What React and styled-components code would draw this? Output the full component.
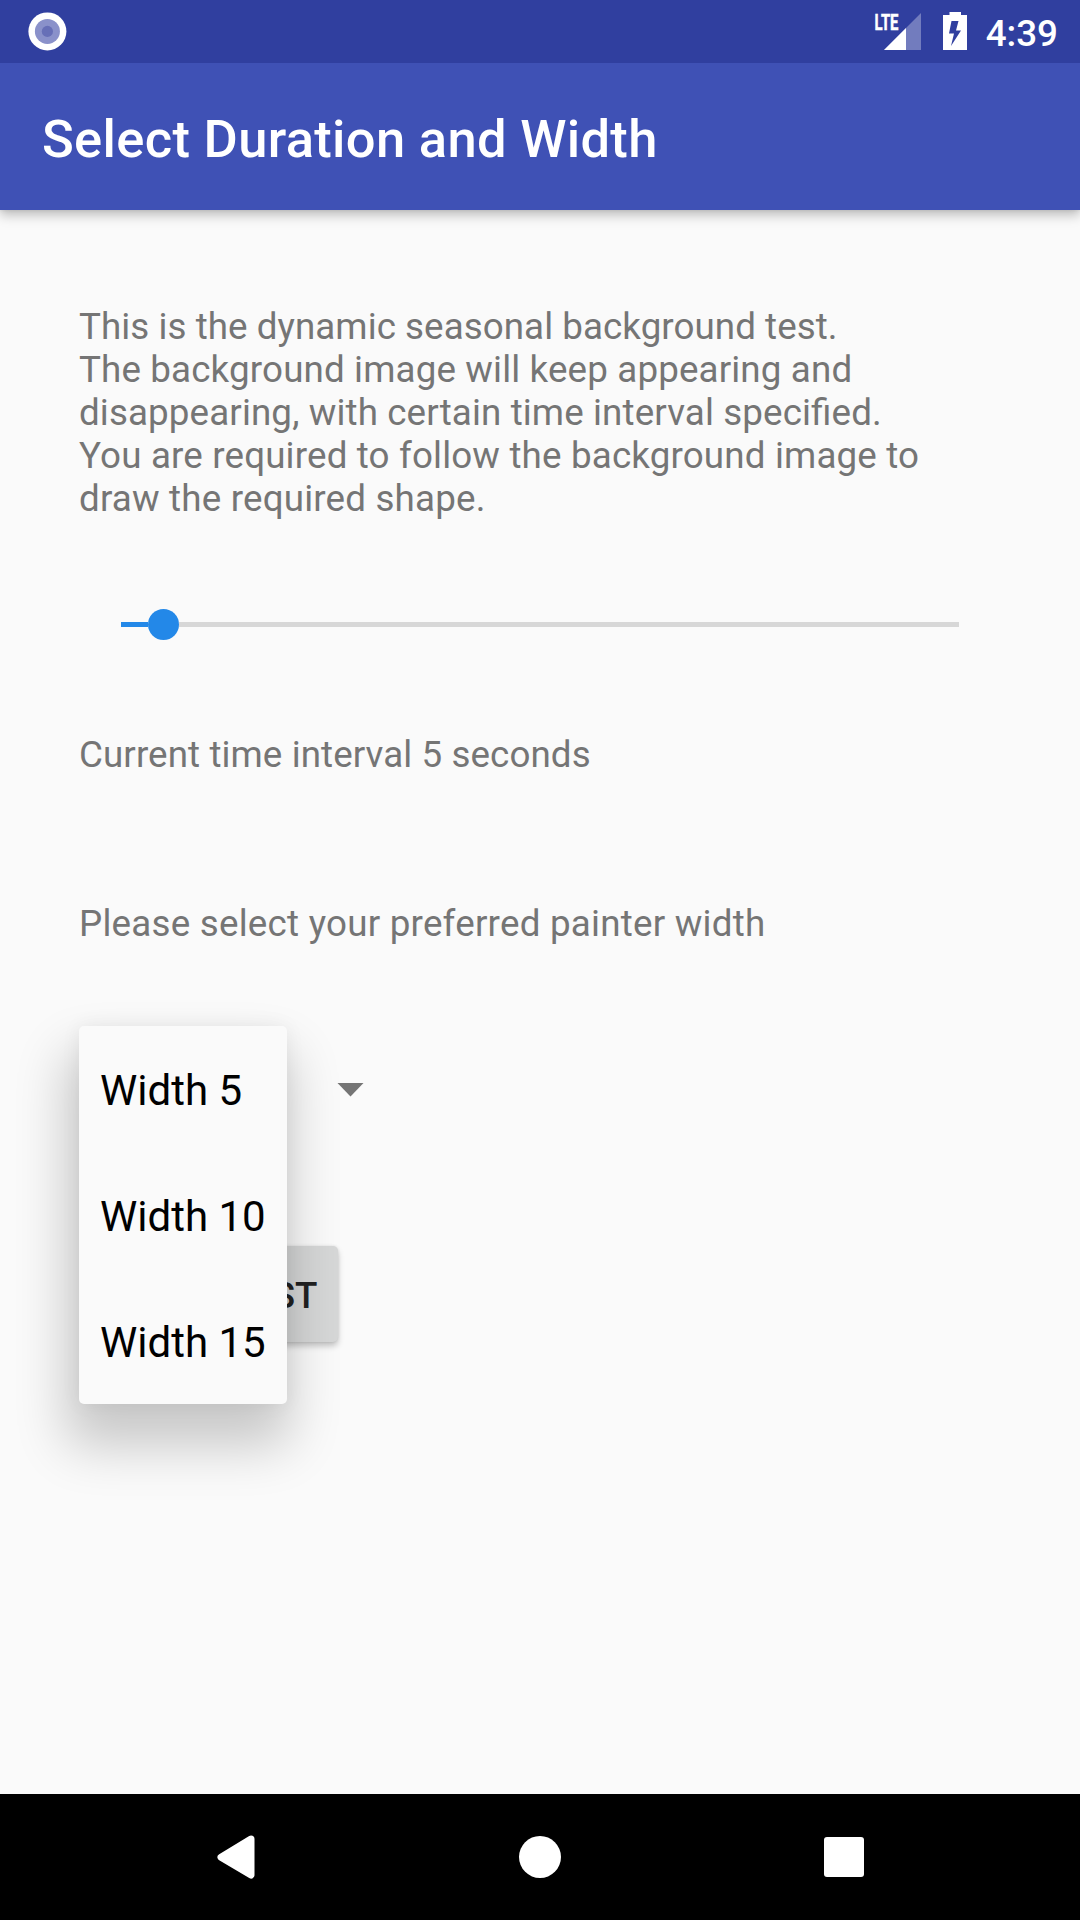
import React from "react";
import styled, { createGlobalStyle } from "styled-components";

const GlobalStyle = createGlobalStyle`
  * { box-sizing: border-box; }
  body { margin: 0; background: #fafafa; }
`;

const Screen = styled.div`
  width: 1080px;
  height: 1920px;
  display: flex;
  flex-direction: column;
  overflow: hidden;
  background: #fafafa;
  font-family: Roboto, "Liberation Sans", sans-serif;
`;

const StatusBar = styled.header`
  height: 63px;
  flex: none;
  display: flex;
  align-items: flex-start;
  justify-content: space-between;
  padding: 0 21px 0 28px;
  background: #303f9f;
  color: #fff;
`;

const StatusIcons = styled.div`
  display: flex;
  align-items: flex-start;
`;

const StatusSvg = styled.svg`
  display: block;
  flex: none;
`;

const NetworkLabel = styled.text`
  font: 700 22.5px Roboto, sans-serif;
  fill: #fff;
  stroke: #fff;
  stroke-width: 0.5px;
`;

const Clock = styled.span`
  margin: 12px 1px 0 19px;
  font-size: 36.75px;
  line-height: 43px;
  font-weight: 500;
`;

const AppBar = styled.div`
  position: relative;
  height: 147px;
  flex: none;
  display: flex;
  align-items: center;
  padding: 4px 42px 0;
  background: #3f51b5;
  box-shadow: 0 5px 11px rgba(0, 0, 0, 0.25), 0 0 4px rgba(0, 0, 0, 0.1);
  clip-path: inset(0 0 -30px 0);
`;

const Title = styled.h1`
  margin: 0;
  font-size: 52.5px;
  line-height: 62px;
  font-weight: 500;
  letter-spacing: 0.32px;
  color: #fff;
  white-space: nowrap;
`;

const Content = styled.main`
  flex: 1;
  display: flex;
  flex-direction: column;
  align-items: flex-start;
  padding: 95px 79px 0;
`;

const Copy = styled.p`
  margin: 0 0 ${(p) => p.$gap}px;
  font-size: 36.75px;
  line-height: 43px;
  color: #757575;
  white-space: nowrap;
`;

const Line = styled.span`
  display: block;
  letter-spacing: ${(p) => p.$tracking}px;
  font-feature-settings: "liga" 1;
`;

const Slider = styled.div`
  width: 838px;
  height: 31px;
  margin: 0 0 93px 42px;
  display: flex;
  align-items: center;
`;

const Track = styled.div`
  width: ${(p) => p.$width}px;
  height: 5px;
  background: ${(p) => p.$color};
`;

const Thumb = styled.div`
  width: 31px;
  height: 31px;
  border-radius: 50%;
  background: #2388e8;
`;

const Spinner = styled.div`
  position: relative;
  width: 285px;
  height: 126px;
  margin-bottom: 94px;
  padding-top: 2px;
  display: flex;
  align-items: center;
  justify-content: flex-end;
`;

const Menu = styled.ul`
  position: absolute;
  z-index: 2;
  left: 0;
  top: 0;
  width: 208px;
  margin: 0;
  padding: 0;
  list-style: none;
  border-radius: 5px;
  background: #fafafa;
  box-shadow: -5px 34px 52px 8px rgba(0, 0, 0, 0.2), 0 0 20px rgba(0, 0, 0, 0.06);
`;

const MenuItem = styled.li`
  height: 126px;
  display: flex;
  align-items: center;
  padding: 3px 0 0 21px;
  font-size: 42px;
  line-height: 49px;
  color: #000;
  white-space: nowrap;
`;

const Button = styled.button`
  width: 248px;
  height: 96px;
  margin-left: 11px;
  padding: 2px 20.5px 0 21px;
  border: 0;
  border-radius: 5px;
  background: #d6d7d7;
  box-shadow: 0 4px 6px rgba(0, 0, 0, 0.22), 0 0 3px rgba(0, 0, 0, 0.1);
  font: 500 36.75px/43px Roboto, sans-serif;
  color: #212121;
  text-align: right;
`;

const NavBar = styled.nav`
  height: 126px;
  flex: none;
  display: grid;
  grid-template-columns: 302px 305px 40px;
  align-items: center;
  padding-left: 217px;
  background: #000;
`;

const widths = ["Width 5", "Width 10", "Width 15"];

const intro = [
  ["This is the dynamic seasonal background test.", 0.055],
  ["The background image will keep appearing and", 0.14],
  ["disappearing, with certain time interval specified.", 0.12],
  ["You are required to follow the background image to", 0.16],
  ["draw the required shape.", 0.18],
];

export default function App() {
  return (
    <Screen>
      <GlobalStyle />
      <StatusBar>
        <StatusSvg width="39" height="63">
          <circle cx="19.4" cy="31.4" r="19" fill="#fff" />
          <circle cx="19.4" cy="31.4" r="12.5" fill="#8a91ca" />
          <circle cx="19.4" cy="31.4" r="5.6" fill="#676fb7" />
        </StatusSvg>
        <StatusIcons>
          <StatusSvg width="96" height="63">
            <path d="M50 13V50H13Z" fill="#fff" fillOpacity=".32" />
            <path d="M35 28V50H13Z" fill="#fff" />
            <NetworkLabel x="3.5" y="29.7" textLength="24" lengthAdjust="spacingAndGlyphs">
              LTE
            </NetworkLabel>
            <path
              fillRule="evenodd"
              fill="#fff"
              d="M78.5 12H90V15H96V50H72V15H78.5ZM80.5 21L78 33.5H83L80 46L90 30.5H85L87.5 21Z"
            />
          </StatusSvg>
          <Clock>4:39</Clock>
        </StatusIcons>
      </StatusBar>
      <AppBar>
        <Title>Select Duration and Width</Title>
      </AppBar>
      <Content>
        <Copy $gap={89}>
          {intro.map(([text, tracking]) => (
            <Line key={text} $tracking={tracking}>
              {text}
            </Line>
          ))}
        </Copy>
        <Slider>
          <Track $width={27} $color="#2388e8" />
          <Thumb />
          <Track $width={780} $color="#d7d7d7" />
        </Slider>
        <Copy $gap={126}>
          <Line $tracking={0.09}>Current time interval 5 seconds</Line>
        </Copy>
        <Copy $gap={81}>
          <Line $tracking={0.23}>Please select your preferred painter width</Line>
        </Copy>
        <Spinner>
          <svg width="27" height="14">
            <path d="M0.5 0H26.5L13.5 13.5Z" fill="#757575" />
          </svg>
          <Menu>
            {widths.map((w) => (
              <MenuItem key={w}>{w}</MenuItem>
            ))}
          </Menu>
        </Spinner>
        <Button>ST</Button>
      </Content>
      <NavBar>
        <svg width="38" height="44">
          <path d="M34 4L4 22.2L34 40Z" fill="#fff" stroke="#fff" strokeWidth="7" strokeLinejoin="round" />
        </svg>
        <svg width="42" height="42">
          <circle cx="21" cy="21" r="21" fill="#fff" />
        </svg>
        <svg width="40" height="40">
          <rect width="40" height="40" rx="3" fill="#fff" />
        </svg>
      </NavBar>
    </Screen>
  );
}
